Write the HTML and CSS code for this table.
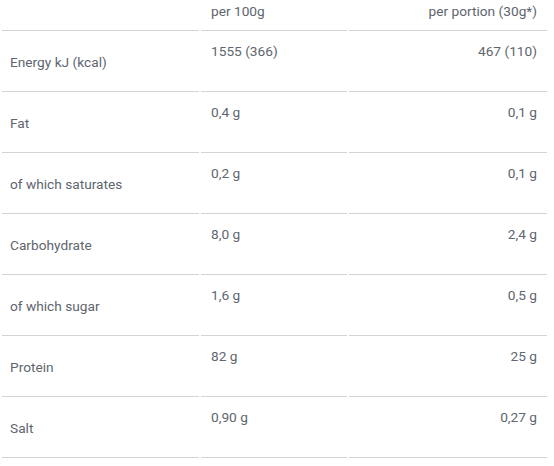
FILE: index.html
```html
<!DOCTYPE html>
<html>
<head>
<meta charset="utf-8">
<link rel="stylesheet" href="styles.css">
</head>
<body>
<table class="nutri">
  <colgroup>
    <col class="w1">
    <col class="w2">
    <col class="w3">
  </colgroup>
  <thead>
    <tr>
      <th class="c1"></th>
      <th class="c2">per 100g</th>
      <th class="c3">per portion (30g*)</th>
    </tr>
  </thead>
  <tbody>
    <tr><td class="c1">Energy kJ (kcal)</td><td class="c2">1555 (366)</td><td class="c3">467 (110)</td></tr>
    <tr><td class="c1">Fat</td><td class="c2">0,4 g</td><td class="c3">0,1 g</td></tr>
    <tr><td class="c1">of which saturates</td><td class="c2">0,2 g</td><td class="c3">0,1 g</td></tr>
    <tr><td class="c1">Carbohydrate</td><td class="c2">8,0 g</td><td class="c3">2,4 g</td></tr>
    <tr><td class="c1">of which sugar</td><td class="c2">1,6 g</td><td class="c3">0,5 g</td></tr>
    <tr><td class="c1">Protein</td><td class="c2">82 g</td><td class="c3">25 g</td></tr>
    <tr><td class="c1">Salt</td><td class="c2">0,90 g</td><td class="c3">0,27 g</td></tr>
  </tbody>
</table>
</body>
</html>
```
FILE: styles.css
```css
html, body {
  margin: 0;
  padding: 0;
  background: #ffffff;
}
.nutri {
  border-collapse: separate;
  border-spacing: 2px 0;
  width: 549px;
  table-layout: fixed;
  font-family: Roboto, "Liberation Sans", sans-serif;
  font-size: 13.7px;
  line-height: 16px;
  color: #60656e;
}
.w1 { width: 197px; }
.w2 { width: 146px; }
.w3 { width: 198px; }
.nutri th, .nutri td {
  border-bottom: 1px solid #d3d3d3;
  padding: 0 8px;
  font-weight: 400;
  text-align: left;
  box-sizing: border-box;
}
.nutri th {
  height: 31px;
  padding-top: 3px;
  padding-bottom: 11px;
  vertical-align: top;
}
.nutri td {
  height: 61px;
}
.nutri .c2 { padding-left: 10px; }
.nutri .c3 { text-align: right; padding-right: 10px; }
.nutri td.c1 { vertical-align: middle; padding-top: 1px; }
.nutri td.c2, .nutri td.c3 { vertical-align: top; padding-top: 12px; }
```
